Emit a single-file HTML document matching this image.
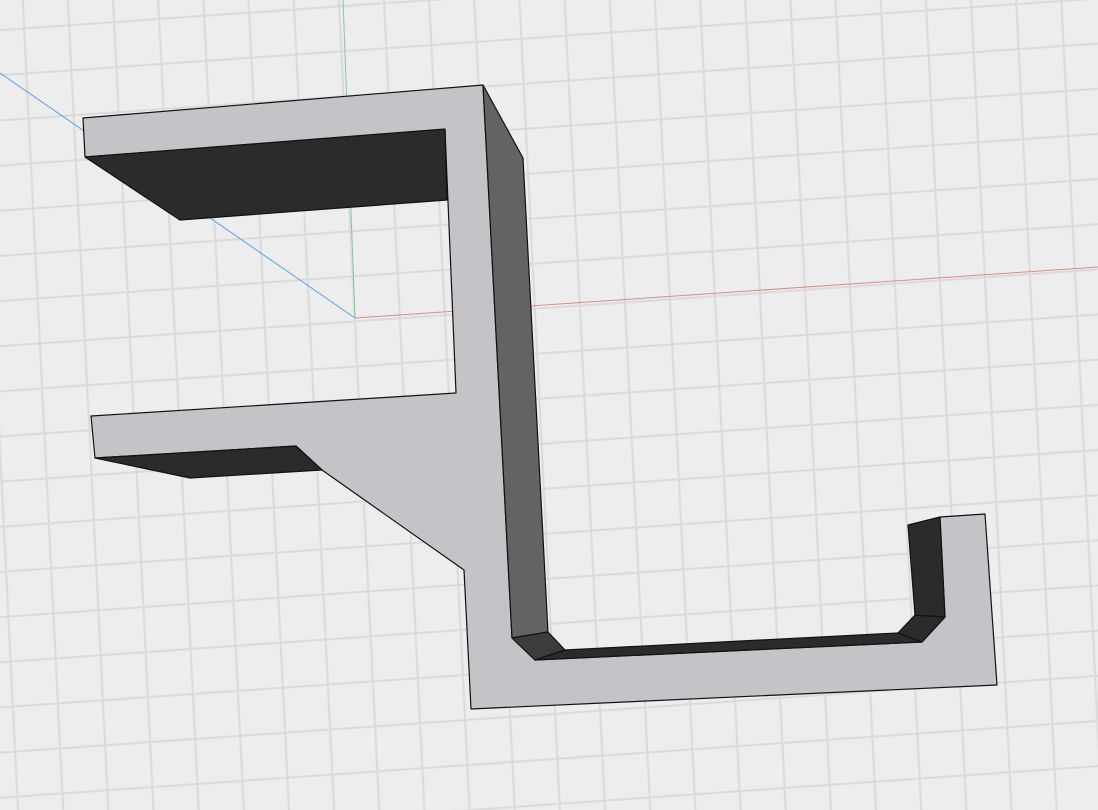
<!DOCTYPE html>
<html><head><style>html,body{margin:0;padding:0;background:#ededed}svg{display:block}</style></head>
<body>
<svg width="1098" height="810" viewBox="0 0 1098 810" xmlns="http://www.w3.org/2000/svg">
<defs>
<pattern id="g" width="45" height="45" patternUnits="userSpaceOnUse" patternTransform="matrix(1,-0.07,0.05,1,0.5,7.5)">
<rect width="45" height="45" fill="#ededed"/>
<path d="M22.5 0V45M0 22.5H45" stroke="#dadada" stroke-width="2" fill="none"/>
</pattern>
</defs>
<rect width="1098" height="810" fill="url(#g)"/>
<line x1="343" y1="0" x2="355" y2="318" stroke="#7fc99a" stroke-width="1"/>
<line x1="0" y1="73" x2="355" y2="318" stroke="#5aa0f0" stroke-width="1"/>
<line x1="355" y1="318" x2="1098" y2="267" stroke="#e08a84" stroke-width="1"/>
<g stroke="#111" stroke-width="1.2" stroke-linejoin="round">
<polygon fill="#c4c4c8" points="83,118 483,85 512,638 535,660 922,642 945,617 940,517 985,514 997,685 471,709 464,570 322,470 296,446 95,458 91,416 456,393 445,130 85,157"/>
<polygon fill="#2b2b2b" points="85,157 445,129 447,200 180,220"/>
<polygon fill="#636363" points="483,85 523,158 548,632 512,638"/>
<polygon fill="#3c3c3c" points="512,638 548,632 565,650 535,660"/>
<polygon fill="#2b2b2b" points="535,660 565,650 898,633 922,642"/>
<polygon fill="#2b2b2b" points="898,633 922,642 945,617 915,615"/>
<polygon fill="#2b2b2b" points="908,525 940,517 945,617 915,615"/>
<polygon fill="#2b2b2b" points="95,458 296,446 322,470 190,478"/>
</g>
</svg>
</body></html>
